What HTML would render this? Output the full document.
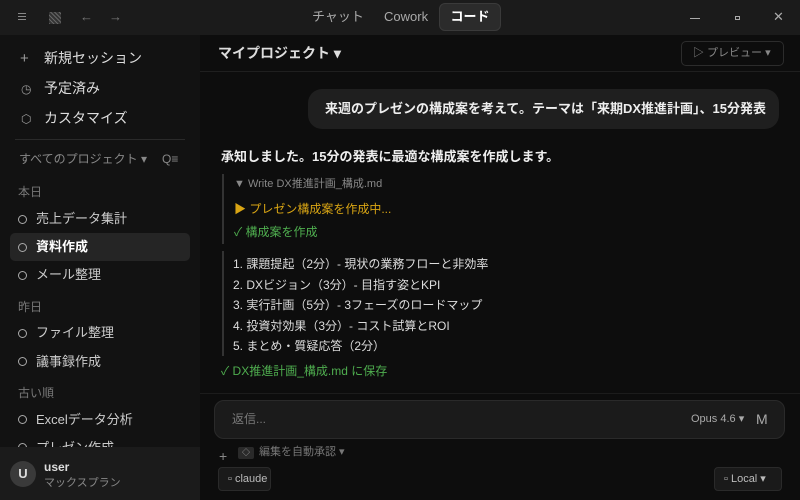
<!DOCTYPE html>
<html><head><meta charset="utf-8"><style>
*{margin:0;padding:0;box-sizing:border-box}
body{width:800px;height:500px;overflow:hidden;background:#0d0d0d;font-family:"Liberation Sans","Noto Sans CJK JP",sans-serif;color:#ddd;position:relative}
.a{position:absolute;white-space:nowrap;line-height:1.2}
.tb{left:0;top:0;width:800px;height:35px;background:#1b1b1b}
.sb{left:0;top:35px;width:200px;height:465px;background:#121212}
.ft{left:0;top:447px;width:200px;height:53px;background:#1b1b1b}
.hd{left:200px;top:71px;width:600px;height:1px;background:#1f1f1f}
.c{position:absolute;left:18px;width:9px;height:9px;border:1.3px solid #aaa;border-radius:50%}
</style></head><body>
<div class="a tb"></div>
<div class="a" style="left:18px;top:13px;width:8px;height:1px;background:#888;box-shadow:0 3px 0 #888,0 6px 0 #888"></div>
<div class="a" style="left:49px;top:12px;width:12px;height:12px;background:repeating-linear-gradient(45deg,#666 0 1px,#333 1px 3px)"></div>
<div class="a" style="left:80px;top:9px;font-size:13px;color:#777">←</div>
<div class="a" style="left:109px;top:9px;font-size:13px;color:#777">→</div>
<div class="a" style="left:312px;top:9px;font-size:13px;color:#aaa">チャット</div>
<div class="a" style="left:384px;top:9px;font-size:13px;color:#aaa">Cowork</div>
<div class="a" style="left:439px;top:3px;width:62px;height:28px;background:#2b2b2b;border:1px solid #3a3a3a;border-radius:6px;color:#fff;font-weight:bold;font-size:13px;text-align:center;line-height:26px">コード</div>
<div class="a" style="left:690px;top:18px;width:10px;height:1px;background:#aaa"></div>
<div class="a" style="left:735px;top:16px;width:5px;height:4px;border:1px solid #aaa"></div>
<div class="a" style="left:773px;top:9px;font-size:13px;color:#aaa">✕</div>
<div class="a sb"></div>
<div class="a" style="left:20px;top:50px;font-size:15px;color:#999">+</div>
<div class="a" style="left:44px;top:50px;font-size:14px;color:#ddd">新規セッション</div>
<div class="a" style="left:21px;top:82px;font-size:12px;color:#999">◷</div>
<div class="a" style="left:44px;top:80px;font-size:14px;color:#ddd">予定済み</div>
<div class="a" style="left:21px;top:112px;font-size:12px;color:#999">⬡</div>
<div class="a" style="left:44px;top:110px;font-size:14px;color:#ddd">カスタマイズ</div>
<div class="a" style="left:15px;top:139px;width:170px;height:1px;background:#2a2a2a"></div>
<div class="a" style="left:19px;top:152px;font-size:12px;color:#888">すべてのプロジェクト ▾</div>
<div class="a" style="left:162px;top:152px;font-size:12px;color:#888">Q≡</div>
<div class="a" style="left:18px;top:185px;font-size:12px;color:#777">本日</div>
<div class="a" style="left:10px;top:233px;width:180px;height:28px;background:#252525;border-radius:5px"></div>
<div class="c" style="top:215px"></div>
<div class="a" style="left:36px;top:211px;font-size:13px;color:#ccc">売上データ集計</div>
<div class="c" style="top:243px"></div>
<div class="a" style="left:36px;top:239px;font-size:13px;color:#fff;font-weight:bold">資料作成</div>
<div class="c" style="top:271px"></div>
<div class="a" style="left:36px;top:267px;font-size:13px;color:#ccc">メール整理</div>
<div class="a" style="left:18px;top:300px;font-size:12px;color:#777">昨日</div>
<div class="c" style="top:329px"></div>
<div class="a" style="left:36px;top:325px;font-size:13px;color:#ccc">ファイル整理</div>
<div class="c" style="top:357px"></div>
<div class="a" style="left:36px;top:354px;font-size:13px;color:#ccc">議事録作成</div>
<div class="a" style="left:18px;top:386px;font-size:12px;color:#777">古い順</div>
<div class="c" style="top:415px"></div>
<div class="a" style="left:36px;top:412px;font-size:13px;color:#ccc">Excelデータ分析</div>
<div class="c" style="top:443px"></div>
<div class="a" style="left:36px;top:440px;font-size:13px;color:#ccc">プレゼン作成</div>
<div class="a ft"></div>
<div class="a" style="left:10px;top:461px;width:26px;height:26px;border-radius:50%;background:#3a3a3a;color:#ddd;font-size:13px;text-align:center;line-height:26px;font-weight:bold">U</div>
<div class="a" style="left:44px;top:460px;font-size:12px;color:#ddd;font-weight:bold">user</div>
<div class="a" style="left:44px;top:477px;font-size:11px;color:#888">マックスプラン</div>
<div class="a hd"></div>
<div class="a" style="left:218px;top:45px;font-size:14px;color:#ddd;font-weight:bold">マイプロジェクト ▾</div>
<div class="a" style="left:681px;top:41px;width:103px;height:25px;border:1px solid #2c2c2c;border-radius:5px;color:#888;font-size:11px;line-height:23px;padding-left:11px">▷ プレビュー ▾</div>
<div class="a" style="left:308px;top:89px;width:471px;height:40px;background:#1f1f1f;border-radius:14px;color:#eee;font-weight:bold;font-size:13px;line-height:40px;padding-left:17px">来週のプレゼンの構成案を考えて。テーマは「来期DX推進計画」、15分発表</div>
<div class="a" style="left:221px;top:149px;font-size:13px;color:#eee;font-weight:bold">承知しました。15分の発表に最適な構成案を作成します。</div>
<div class="a" style="left:222px;top:174px;width:2px;height:70px;background:#333"></div>
<div class="a" style="left:234px;top:178px;font-size:11px;color:#888">▼ Write DX推進計画_構成.md</div>
<div class="a" style="left:234px;top:202px;font-size:12px;color:#d9a514">▶ プレゼン構成案を作成中...</div>
<div class="a" style="left:234px;top:225px;font-size:12px;color:#4fae4f">✓ 構成案を作成</div>
<div class="a" style="left:222px;top:251px;width:2px;height:105px;background:#333"></div>
<div class="a" style="left:233px;top:254px;font-size:12px;color:#ddd;line-height:20.5px">1. 課題提起（2分）- 現状の業務フローと非効率<br>2. DXビジョン（3分）- 目指す姿とKPI<br>3. 実行計画（5分）- 3フェーズのロードマップ<br>4. 投資対効果（3分）- コスト試算とROI<br>5. まとめ・質疑応答（2分）</div>
<div class="a" style="left:221px;top:364px;font-size:12px;color:#4fae4f">✓ DX推進計画_構成.md に保存</div>
<div class="a" style="left:200px;top:393px;width:600px;height:1px;background:#1c1c1c"></div>
<div class="a" style="left:214px;top:400px;width:571px;height:39px;background:#1b1b1b;border:1px solid #2a2a2a;border-radius:10px"></div>
<div class="a" style="left:232px;top:412px;font-size:12px;color:#777">返信...</div>
<div class="a" style="left:691px;top:413px;font-size:11px;color:#aaa">Opus 4.6 ▾</div>
<div class="a" style="left:756px;top:411px;font-size:14px;color:#aaa">M</div>
<div class="a" style="left:219px;top:448px;font-size:14px;color:#888">+</div>
<div class="a" style="left:238px;top:447px;width:16px;height:12px;background:#2a2a2a;border-radius:2px;font-size:8px;color:#aaa;text-align:center;line-height:12px">◇</div>
<div class="a" style="left:259px;top:446px;font-size:11px;color:#777">編集を自動承認 ▾</div>
<div class="a" style="left:218px;top:467px;width:53px;height:24px;background:#1a1a1a;border:1px solid #2a2a2a;border-radius:4px;font-size:11px;color:#bbb;line-height:22px;padding-left:9px">▫ claude</div>
<div class="a" style="left:714px;top:467px;width:68px;height:24px;background:#1a1a1a;border:1px solid #2a2a2a;border-radius:4px;font-size:11px;color:#bbb;line-height:22px;padding-left:9px">▫ Local ▾</div>
</body></html>
